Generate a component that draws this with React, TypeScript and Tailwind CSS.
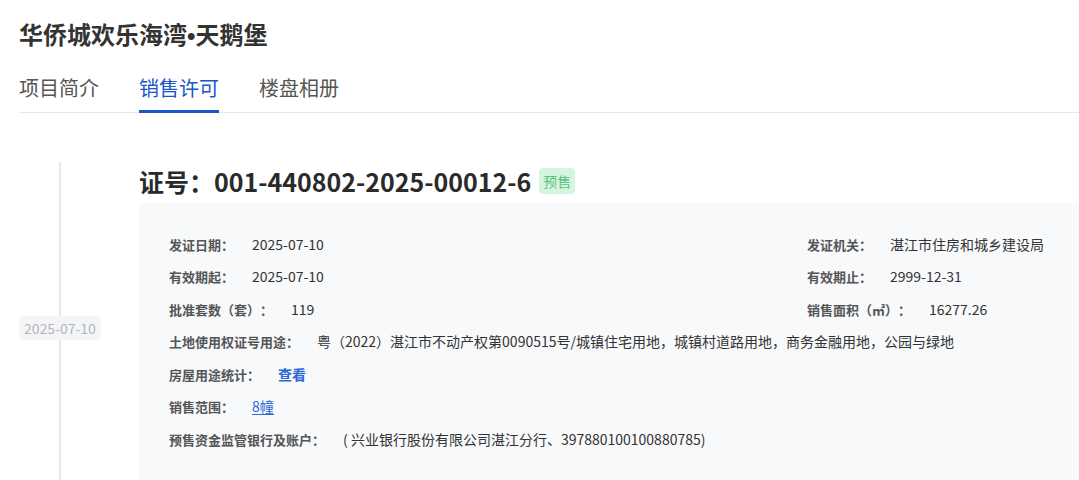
// 楼盘详情 - 销售许可 tab
import React from "react";

type Field = { label: string; value: string; kind?: "link" | "underline" };

const rows: [Field, Field | null][] = [
  [{ label: "发证日期：", value: "2025-07-10" }, { label: "发证机关：", value: "湛江市住房和城乡建设局" }],
  [{ label: "有效期起：", value: "2025-07-10" }, { label: "有效期止：", value: "2999-12-31" }],
  [{ label: "批准套数（套）：", value: "119" }, { label: "销售面积（㎡）：", value: "16277.26" }],
  [
    {
      label: "土地使用权证号用途：",
      value: "粤（2022）湛江市不动产权第0090515号/城镇住宅用地，城镇村道路用地，商务金融用地，公园与绿地",
    },
    null,
  ],
  [{ label: "房屋用途统计：", value: "查看", kind: "link" }, null],
  [{ label: "销售范围：", value: "8幢", kind: "underline" }, null],
  [{ label: "预售资金监管银行及账户：", value: "( 兴业银行股份有限公司湛江分行、397880100100880785)" }, null],
];

const tabs = ["项目简介", "销售许可", "楼盘相册"];

function Item({ f }: { f: Field }) {
  return (
    <div className="flex items-center whitespace-nowrap">
      <span className="text-[13px] font-semibold text-[#555]">{f.label}</span>
      <span
        className={
          "ml-[18px] text-[14px] " +
          (f.kind === "link"
            ? "text-[#2c68d4] font-semibold"
            : f.kind === "underline"
            ? "text-[#2c68d4] underline underline-offset-2"
            : "text-[#333]")
        }
      >
        {f.value}
      </span>
    </div>
  );
}

export default function App() {
  return (
    <div
      className="w-[1079px] h-[480px] overflow-hidden bg-white pl-[19px] pt-[18px] [text-spacing-trim:space-all]"
      style={{ fontFamily: '"Noto Sans CJK SC", sans-serif' }}
    >
      {/* 标题 */}
      <h1 className="h-8 text-[24px] leading-8 font-bold text-[#333]">
        华侨城欢乐海湾<span className="font-['Liberation_Sans'] leading-none">•</span>天鹅堡
      </h1>

      {/* 탭 */}
      <div className="mt-6 flex gap-10 border-b border-[#e5e7eb]">
        {tabs.map((t, i) => (
          <div
            key={t}
            className={
              "-mb-px pb-2 border-b-[3px] text-[20px] leading-7 " +
              (i === 1 ? "border-[#1a56c6] text-[#1a56c6]" : "border-transparent text-[#555]")
            }
          >
            {t}
          </div>
        ))}
      </div>

      {/* 时间线 */}
      <div className="mt-[49px] flex">
        <div className="relative w-[120px] shrink-0 flex items-center">
          <div className="absolute left-[40px] top-0 bottom-0 w-[2px] bg-[#e6e8f0]" />
          <span className="relative rounded bg-[#f4f5f7] px-[5px] text-[14px] leading-6 text-[#b3b6bc]">
            2025-07-10
          </span>
        </div>

        <div className="flex-1 pt-[2px]">
          <div className="flex items-center gap-2">
            <h2 className="text-[25px] leading-[34px] font-bold text-[#2a2a2a]">证号：001-440802-2025-00012-6</h2>
            <span className="rounded-sm bg-[#d6f5e1] px-[4px] text-[14px] leading-[26px] text-[#5bbf83]">预售</span>
          </div>

          <div className="mt-[5px] bg-[#f7f9fb] pl-[30px] pt-[25px] pb-[39px]">
            {rows.map(([a, b], i) => (
              <div key={i} className="grid h-[32.5px] grid-cols-[638px_1fr] items-center">
                <Item f={a} />
                {b ? <Item f={b} /> : <div />}
              </div>
            ))}
          </div>
        </div>
      </div>
    </div>
  );
}
